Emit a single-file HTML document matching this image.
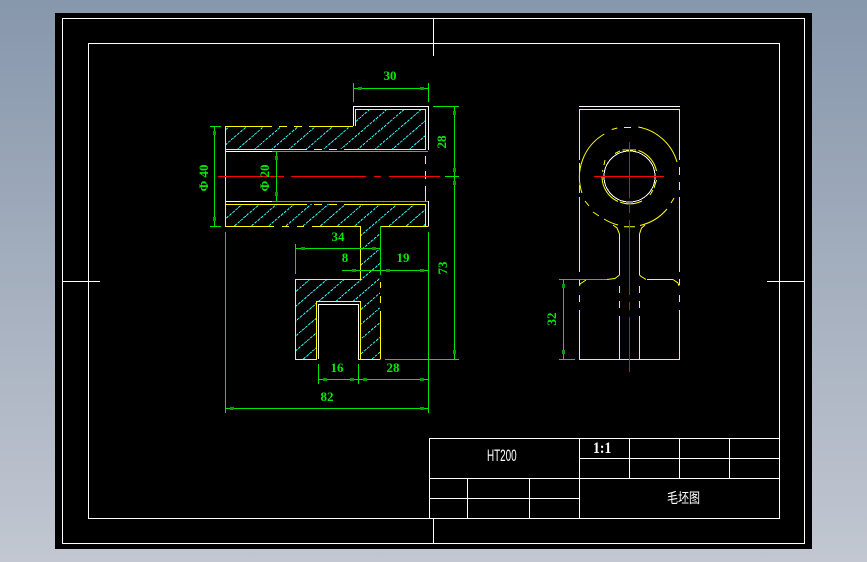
<!DOCTYPE html>
<html><head><meta charset="utf-8"><style>
html,body{margin:0;padding:0;width:867px;height:562px;overflow:hidden;background:linear-gradient(#8797ac,#c2c7d1)}
svg{position:absolute;left:0;top:0}
text{font-family:"Liberation Serif","Noto Sans CJK SC",serif}
.g{fill:#00ea00;font-size:13px;font-weight:bold;text-anchor:middle}
</style></head><body>
<svg width="867" height="562" viewBox="0 0 867 562" xmlns="http://www.w3.org/2000/svg">
<defs>
<clipPath id="hc"><path d="M225 126H355V109H425V149H225ZM225 204H425V226H380V359H360V301H316V359H295V279H360V226H225Z"/></clipPath>
</defs>
<rect x="55" y="13" width="757" height="536" fill="#000"/>
<g fill="none" shape-rendering="crispEdges">
<!-- hatch -->
<g clip-path="url(#hc)" stroke="#30f0f0" stroke-width="1" stroke-dasharray="3 1">
<path d="M-40.7 359l301 -259M-23.5 359l301 -259M-6.3 359l301 -259M10.9 359l301 -259M28.1 359l301 -259M45.3 359l301 -259M62.5 359l301 -259M79.7 359l301 -259M96.9 359l301 -259M114.1 359l301 -259M131.3 359l301 -259M148.5 359l301 -259M165.7 359l301 -259M182.9 359l301 -259M200.1 359l301 -259M217.3 359l301 -259M234.5 359l301 -259M251.7 359l301 -259M268.9 359l301 -259M286.1 359l301 -259M303.3 359l301 -259M320.5 359l301 -259M337.7 359l301 -259M354.9 359l301 -259M372.1 359l301 -259M389.3 359l301 -259M406.5 359l301 -259M423.7 359l301 -259"/>
</g>
<!-- frames -->
<g stroke="#fff">
<rect x="62.5" y="18.5" width="742" height="525"/>
<rect x="88.5" y="43.5" width="691" height="475"/>
<path d="M433.5 18V56M433.5 518V544M62 281.5H100M767 281.5H804"/>
<!-- title block -->
<path d="M429.5 438.5H779M429.5 438V518M429 478.5H779M579.5 438V518M579 458.5H779M629.5 438V478M679.5 438V478M729.5 438V478M429 498.5H579M467.5 478V518M529.5 478V518"/>
<!-- front white -->
<path d="M353.5 126V106.5H428.5V150M225 151.5H272M225 201.5H272M428.5 201V226.5M318.5 359V304.5H358.5V359"/>
<!-- side white -->
<path d="M579 106.5H680"/>
<circle cx="629.5" cy="176.5" r="25.5"/>
</g>
<!-- yellow -->
<g stroke="#ffff00">
<path d="M225.5 126.5H272M279 126.5H287M294 126.5H302M309 126.5H353M355.5 126V109.5H425.5V149M225.5 126V226"/>
<path d="M225 149.5H307M314 149.5H322M329 149.5H337M344 149.5H426"/>
<path d="M225 204.5H307M314 204.5H322M329 204.5H337M344 204.5H426"/>
<path d="M225 226.5H274M282 226.5H289M297 226.5H304M312 226.5H360M380 226.5H428"/>
<path d="M425.5 156V164M425.5 171V179M425.5 186V201M425.5 204V226"/>
<path d="M360.5 226V279.5H295.5V359.5H317M358 359.5H380.5M380.5 282V288M380.5 296V303M380.5 311V359M316.5 359V301.5H360.5V359"/>
<!-- side view -->
<path d="M579.5 109.5H679.5M579.5 109V160M579.5 163V172M579.5 185V193M579.5 197V272M579.5 279V285M579.5 295V302M579.5 310V359.5H679.5V310M679.5 302V295M679.5 285V279M679.5 272V197M679.5 190V182M679.5 175V167M679.5 160V109"/>
<path d="M619.5 234V275M619.5 286V293M619.5 301V308M619.5 316V359M639.5 234V275M639.5 286V293M639.5 301V308M639.5 316V359"/>
<path d="M647 279.5H673"/>
</g>
<g stroke="#ffff00" shape-rendering="auto">
<path d="M624 127.5H631M611.7 129.5L617.3 128M638.3 127A49.5 49.5 0 0 1 677 162M674 198L671 203M667 209A50 50 0 0 1 640 225.5M624 226.8H635M604 219A50 50 0 0 0 618 225M593 212L599 216M585 201L589 206M604.3 134A50 50 0 0 0 582 193"/>
<path d="M615 153.5L620 151M622.5 150H636M638.5 150.5A27.5 27.5 0 0 1 656.5 171M656.5 180L654 188M653 190L650 195M642 201A27.5 27.5 0 0 1 620 202M602 177A27.5 27.5 0 0 0 618 201.5M602.5 170L603 172M604 165L605 160"/>
<path d="M613 225L617 228L619.5 234M645 225L641.5 228L639.5 234M619.5 275L615 278.5L607 279.5M639.5 275L640.5 276L646 279.5M673 279.5L678 283L679 286M586 280L580 284L579.5 286"/>
</g>
<!-- red -->
<g stroke="#ff0000">
<path d="M218 176.5H284M291 176.5H366M374 176.5H381M389 176.5H440"/>
<path d="M594 176.5H664M629.5 142V198M629.5 205V213M629.5 220V295M629.5 302V310M629.5 317V372"/>
</g>
<!-- green dims -->
<g stroke="#00e600">
<path d="M353.5 83V102M428.5 83V102M353 88.5H428"/>
<path d="M214.5 126V226M210 126.5H221M210 226.5H221"/>
<path d="M276.5 151V201M272 151.5H428M272 201.5H428"/>
<path d="M454.5 106V359M433 106.5H459M445 176.5H459M385 359.5H459"/>
<path d="M225.5 232V413M428.5 232V413M225 408.5H428"/>
<path d="M295.5 244V274M295 248.5H380M342 270.5H428M380.5 226V275"/>
<path d="M318.5 364V384M358.5 364V384M318 379.5H428"/>
<path d="M559 279.5H607M559 359.5H575M563.5 279V359"/>
</g>
<!-- arrows -->
<g stroke="#0a9a0a" stroke-width="3">
<path d="M358 88.5H362M420 88.5H424M214.5 131V135M214.5 217V221M276.5 156V160M276.5 192V196M454.5 111V115M454.5 168V172M454.5 181V185M454.5 350V354M230 408.5H234M420 408.5H424M301 248.5H305M372 248.5H376M352 270.5H356M386 270.5H390M420 270.5H424M323 379.5H327M350 379.5H354M363 379.5H367M420 379.5H424M563.5 284V288M563.5 350V354"/>
</g>
</g>
<!-- dimension text -->
<g class="g">
<text class="g" x="390" y="80">30</text>
<text class="g" x="338" y="241">34</text>
<text class="g" x="345" y="262">8</text>
<text class="g" x="403" y="262">19</text>
<text class="g" x="337" y="372">16</text>
<text class="g" x="393" y="372">28</text>
<text class="g" x="327" y="401">82</text>
<text class="g" transform="translate(446,142) rotate(-90)">28</text>
<text class="g" transform="translate(447,268) rotate(-90)">73</text>
<text class="g" transform="translate(556,319) rotate(-90)">32</text>
<text class="g" transform="translate(208,178) rotate(-90)">Φ 40</text>
<text class="g" transform="translate(269,178) rotate(-90)">Φ 20</text>
</g>
<!-- title text -->
<text fill="#fff" font-size="16.5" style="font-family:'Liberation Sans',sans-serif" transform="translate(487,461) scale(.6,1)">HT200</text>
<text fill="#fff" font-size="16" font-weight="bold" transform="translate(593,453) scale(.86,1)">1:1</text>
<text fill="#fff" font-size="14.5" style="font-family:'Noto Sans CJK SC',sans-serif" transform="translate(667,503) scale(.76,1)">毛坯图</text>
</svg>
</body></html>
